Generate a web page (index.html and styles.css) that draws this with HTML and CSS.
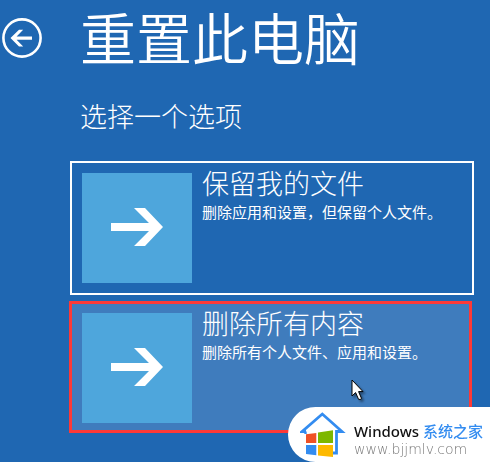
FILE: index.html
```html
<!DOCTYPE html>
<html lang="zh-CN">
<head>
    <meta charset="UTF-8">
    <meta name="viewport" content="width=device-width, initial-scale=1.0">
    <title>重置此电脑</title>
    <link rel="stylesheet" href="styles.css">
</head>
<body>
    <header>
        <button type="button" class="back" aria-label="返回">
            <svg viewBox="0 0 40 40" width="40" height="40">
                <circle cx="20" cy="20" r="18.6" fill="none" stroke="#fff" stroke-width="2.6"/>
                <path d="M8.5 20 L17 11.7 H21.2 L14.6 18.5 H30 V21.7 H14.6 L21.2 28.6 H17 Z" fill="#fff"/>
            </svg>
        </button>
        <h1>重置此电脑</h1>
    </header>

    <main>
        <h2>选择一个选项</h2>

        <button type="button" class="option">
            <span class="tile">
                <svg viewBox="0 0 110 110" width="110" height="110">
                    <path d="M29 50 H67 L52 35 H63 L81 54 L63 73 H52 L67 58 H29 Z" fill="#fff"/>
                </svg>
            </span>
            <span class="text">
                <span class="name">保留我的文件</span>
                <span class="note">删除应用和设置，但保留个人文件。</span>
            </span>
        </button>

        <button type="button" class="option selected">
            <span class="tile">
                <svg viewBox="0 0 110 110" width="110" height="110">
                    <path d="M29 50 H67 L52 35 H63 L81 54 L63 73 H52 L67 58 H29 Z" fill="#fff"/>
                </svg>
            </span>
            <span class="text">
                <span class="name">删除所有内容</span>
                <span class="note">删除所有个人文件、应用和设置。</span>
            </span>
            <svg class="cursor" viewBox="0 0 13 22" width="13" height="22">
                <path d="M1 1 V17 L4.6 13.6 L7.6 20.4 H9.8 L10.4 19.2 L7.6 12.6 H12 Z" fill="#fff" stroke="#000" stroke-width="1"/>
            </svg>
        </button>
    </main>

    <aside class="watermark">
        <svg viewBox="0 0 46 46" width="46" height="46">
            <path d="M6 20.5 H2.2 L22.3 3 L42 20.5 H36.5 V42 H33" fill="none" stroke="#338cf0" stroke-width="2.8"/>
            <path d="M5.5 20.5 V23" stroke="#338cf0" stroke-width="2.4"/>
            <path d="M6 23.3 L16.3 22 V32 H6 Z" fill="#f05125"/>
            <path d="M18 21.5 L33 19.2 V32 H18 Z" fill="#7db700"/>
            <path d="M6 34 H16.3 V44.2 L6 43 Z" fill="#338cf0"/>
            <path d="M18 34 H33 V46 L18 44.4 Z" fill="#fdb900"/>
        </svg>
        <div class="site">
            <div class="brand">Windows <span>系统之家</span></div>
            <div class="url">www.bjjmlv.com</div>
        </div>
    </aside>
</body>
</html>
```

FILE: styles.css
```css
* {
    box-sizing: border-box;
}

body {
    margin: 0;
    min-height: 100vh;
    background: #1f67b2;
    color: #fff;
    font-family: "Open Sans", "Noto Sans CJK SC", sans-serif;
}

button {
    padding: 0;
    border: none;
    background: none;
    color: inherit;
    font-family: inherit;
    cursor: pointer;
}

svg {
    display: block;
}

header {
    display: flex;
    align-items: center;
    gap: 38px;
    padding: 0 2px;
}

h1 {
    margin: 0;
    font-size: 56px;
    font-weight: 350;
    line-height: 76px;
}

main {
    display: flex;
    flex-direction: column;
    padding: 21px 16px 28px 70px;
}

h2 {
    margin: 0 0 24px;
    padding-left: 10px;
    font-size: 27px;
    font-weight: 300;
    line-height: 40px;
}

.option {
    display: flex;
    position: relative;
    padding: 10px;
    border: 2px solid #fff;
    text-align: left;
}

.option.selected {
    margin: 6px 2px 0 -1px;
    padding: 9px 10px 7px;
    border: 3px solid #fd3937;
    background: #3f7cbd;
}

.tile {
    flex: none;
    background: #4ea6dc;
}

.text {
    padding-left: 10px;
}

.name,
.note {
    display: block;
}

.name {
    font-size: 27px;
    font-weight: 300;
    line-height: 22px;
}

.note {
    margin-top: 7px;
    font-size: 15px;
    line-height: 20px;
}

.cursor {
    position: absolute;
    left: 279px;
    top: 75px;
    filter: drop-shadow(2px 2px 1px rgba(0, 0, 0, 0.4));
}

.watermark {
    display: flex;
    position: fixed;
    right: 0;
    bottom: 0;
    gap: 8px;
    width: 202px;
    height: 55px;
    padding: 4px 0 0 12px;
    border-radius: 28px 0 0 28px;
    background: #fff;
}

.site {
    padding-top: 10px;
    white-space: nowrap;
}

.brand {
    color: #111;
    font-family: "Noto Sans", "Noto Sans CJK SC", sans-serif;
    font-size: 15px;
    font-weight: 500;
    line-height: 20px;
}

.brand span {
    color: #338cf0;
}

.url {
    color: #777;
    font-family: "DejaVu Sans Light", "DejaVu Sans", sans-serif;
    font-size: 14px;
    font-weight: 200;
    line-height: 16px;
}
```
